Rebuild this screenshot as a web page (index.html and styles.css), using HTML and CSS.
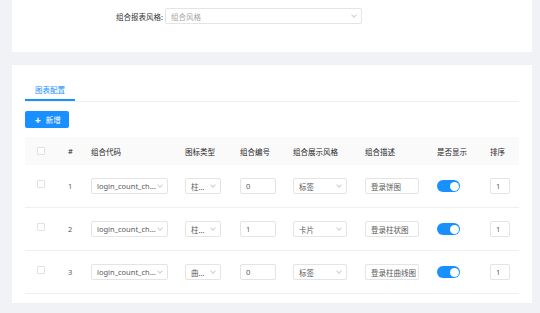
FILE: index.html
```html
<!DOCTYPE html>
<html lang="zh-CN">
<head>
    <meta charset="UTF-8">
    <title>组合报表配置</title>
    <link rel="stylesheet" href="styles.css">
</head>
<body>
    <div class="page">
        <div class="card card-form">
            <div class="form-row">
                <label class="form-label">组合报表风格:</label>
                <div class="select select-wide">
                    <span class="placeholder">组合风格</span>
                    <span class="arrow"></span>
                </div>
            </div>
        </div>

        <div class="card card-main">
            <div class="tabs">
                <div class="tab active">图表配置</div>
            </div>

            <button class="btn-primary"><span class="plus">+</span> 新增</button>

            <div class="table">
                <div class="tr thead">
                    <div class="td col-check"><span class="checkbox"></span></div>
                    <div class="td">#</div>
                    <div class="td">组合代码</div>
                    <div class="td">图标类型</div>
                    <div class="td">组合编号</div>
                    <div class="td">组合展示风格</div>
                    <div class="td">组合描述</div>
                    <div class="td">是否显示</div>
                    <div class="td">排序</div>
                </div>

                <div class="tr">
                    <div class="td col-check"><span class="checkbox"></span></div>
                    <div class="td">1</div>
                    <div class="td"><div class="select select-code"><span>login_count_ch...</span><span class="arrow"></span></div></div>
                    <div class="td"><div class="select select-type"><span>柱...</span><span class="arrow"></span></div></div>
                    <div class="td"><div class="input input-num">0</div></div>
                    <div class="td"><div class="select select-style"><span>标签</span><span class="arrow"></span></div></div>
                    <div class="td"><div class="input input-desc">登录饼图</div></div>
                    <div class="td"><span class="switch"></span></div>
                    <div class="td"><div class="input input-sort">1</div></div>
                </div>

                <div class="tr">
                    <div class="td col-check"><span class="checkbox"></span></div>
                    <div class="td">2</div>
                    <div class="td"><div class="select select-code"><span>login_count_ch...</span><span class="arrow"></span></div></div>
                    <div class="td"><div class="select select-type"><span>柱...</span><span class="arrow"></span></div></div>
                    <div class="td"><div class="input input-num">1</div></div>
                    <div class="td"><div class="select select-style"><span>卡片</span><span class="arrow"></span></div></div>
                    <div class="td"><div class="input input-desc">登录柱状图</div></div>
                    <div class="td"><span class="switch"></span></div>
                    <div class="td"><div class="input input-sort">1</div></div>
                </div>

                <div class="tr">
                    <div class="td col-check"><span class="checkbox"></span></div>
                    <div class="td">3</div>
                    <div class="td"><div class="select select-code"><span>login_count_ch...</span><span class="arrow"></span></div></div>
                    <div class="td"><div class="select select-type"><span>曲...</span><span class="arrow"></span></div></div>
                    <div class="td"><div class="input input-num">0</div></div>
                    <div class="td"><div class="select select-style"><span>标签</span><span class="arrow"></span></div></div>
                    <div class="td"><div class="input input-desc">登录柱曲线图</div></div>
                    <div class="td"><span class="switch"></span></div>
                    <div class="td"><div class="input input-sort">1</div></div>
                </div>
            </div>
        </div>
    </div>
</body>
</html>
```

FILE: styles.css
```css
body {
    margin: 0;
    background-color: #f0f2f5;
    font-family: 'Noto Sans', 'Noto Sans CJK SC', sans-serif;
    font-size: 7.5px;
    color: #595959;
    height: 313px;
    overflow: hidden;
}
.page {
    display: flex;
    flex-direction: column;
    gap: 13px;
    padding: 0 8px 0 12px;
}
.card {
    background-color: #ffffff;
}
.card-form {
    height: 44px;
    padding-top: 8px;
}
.form-row {
    display: flex;
    align-items: center;
}
.form-label {
    width: 151px;
    padding-right: 2px;
    text-align: right;
    color: #333333;
}
.select {
    display: flex;
    align-items: center;
    justify-content: space-between;
    box-sizing: border-box;
    height: 16px;
    padding: 0 5px;
    border: 1px solid #e4e4e4;
    border-radius: 2px;
    background-color: #ffffff;
    color: #595959;
    white-space: nowrap;
    overflow: hidden;
}
.select-wide {
    width: 197px;
}
.placeholder {
    color: #a6a6a6;
}
.arrow {
    width: 3px;
    height: 3px;
    border-right: 1px solid #cfcfcf;
    border-bottom: 1px solid #cfcfcf;
    transform: rotate(45deg);
    margin-top: -2px;
    flex-shrink: 0;
}
.card-main {
    height: 238px;
    padding: 0 13px;
    box-sizing: border-box;
}
.tabs {
    display: flex;
    height: 36px;
    border-bottom: 1px solid #f0f0f0;
}
.tab {
    display: flex;
    align-items: center;
    padding: 14px 10px 0;
    color: #1890ff;
}
.tab.active {
    border-bottom: 2px solid #1890ff;
}
.btn-primary {
    display: flex;
    align-items: center;
    gap: 5px;
    margin-top: 9px;
    height: 17px;
    width: 44px;
    padding: 0 0 0 10px;
    border: none;
    border-radius: 2px;
    background-color: #1890ff;
    color: #ffffff;
    font-family: inherit;
    font-size: 7.5px;
}
.plus {
    font-size: 10px;
    font-weight: bold;
    line-height: 1;
}
.table {
    margin-top: 9px;
}
.tr {
    display: grid;
    grid-template-columns: 39px 23px 94px 55px 53px 72px 72px 53px 1fr;
    align-items: center;
    height: 43px;
    border-bottom: 1px solid #f0f0f0;
    box-sizing: border-box;
}
.tr.thead {
    height: 28px;
    background-color: #fafafa;
    color: #262626;
    border-bottom: none;
}
.td {
    padding-left: 4px;
    white-space: nowrap;
}
.tr .col-check {
    padding-left: 12px;
    display: flex;
}
.checkbox {
    width: 8px;
    height: 8px;
    box-sizing: border-box;
    border: 1px solid #e2e2e2;
    border-radius: 1px;
    background-color: #ffffff;
    margin-top: -5px;
}
.thead .checkbox {
    margin-top: 0;
}
.select-code {
    width: 77px;
}
.select-type {
    width: 36px;
}
.select-style {
    width: 54px;
}
.input {
    display: flex;
    align-items: center;
    box-sizing: border-box;
    height: 16px;
    padding: 0 5px;
    border: 1px solid #e4e4e4;
    border-radius: 2px;
    color: #595959;
    overflow: hidden;
    white-space: nowrap;
}
.input-num {
    width: 36px;
}
.input-desc {
    width: 54px;
}
.input-sort {
    width: 20px;
}
.switch {
    display: block;
    position: relative;
    width: 23px;
    height: 12px;
    border-radius: 6px;
    background-color: #1890ff;
}
.switch::after {
    content: '';
    position: absolute;
    top: 1.5px;
    right: 1.5px;
    width: 9px;
    height: 9px;
    border-radius: 50%;
    background-color: #ffffff;
}
```
